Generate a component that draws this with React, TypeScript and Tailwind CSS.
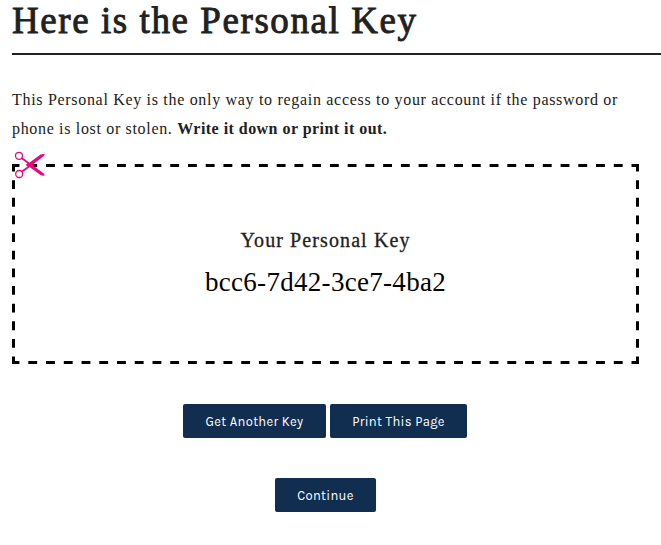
import type { ReactNode } from 'react';

function DashedFrame() {
  return (
    <svg className="absolute inset-0" width="627" height="200" viewBox="0 0 627 200" fill="none" aria-hidden="true">
      <g stroke="#000" strokeWidth="3">
        <g strokeDasharray="8.871 8.871" strokeDashoffset="4.436">
          <path d="M3 1.5H624" />
          <path d="M3 198.5H624" />
        </g>
        <g strokeDasharray="8.818 8.818" strokeDashoffset="4.409">
          <path d="M1.5 3V197" />
          <path d="M625.5 3V197" />
        </g>
      </g>
      <path d="M0 0h3v3h-3zM624 0h3v3h-3zM0 197h3v3h-3zM624 197h3v3h-3z" fill="#000" />
    </svg>
  );
}

function Scissors() {
  return (
    <svg className="absolute left-[2px] -top-[13px]" width="32" height="28" viewBox="0 0 32 28" fill="none" aria-hidden="true">
      <g stroke="#e5097f">
        <circle cx="5" cy="4.8" r="3.5" strokeWidth="1.3" />
        <circle cx="5.2" cy="23" r="3.5" strokeWidth="1.3" />
        <path d="M7.5 7L15 12.5M7.8 20.7L15 15.5" strokeWidth="1.8" />
      </g>
      <g fill="#e5097f">
        <path d="M12 14.2L26.5 3.6Q28.4 2.8 30.7 3L30 4.7L16 15.8L13.8 15.6Z" />
        <path d="M12 13.5L26.5 24.1Q28.4 24.9 30.7 24.6L30 22.8L16 12L13.8 12.2Z" />
      </g>
    </svg>
  );
}

function Button({ className, children }: { className: string; children: ReactNode }) {
  return (
    <button className={`h-[34px] rounded-[2px] bg-[#112e51] pt-[2px] font-[Karla,Inter,sans-serif] text-[13px] text-white whitespace-nowrap ${className}`}>
      {children}
    </button>
  );
}

export default function App() {
  return (
    <main className="h-[545px] overflow-hidden bg-white pl-3 font-['Liberation_Serif',serif] text-[#212121]">
      <h1 className="h-[55px] border-b-2 border-[#212121] pt-px text-[37px] leading-[40px] tracking-[1.57px] whitespace-nowrap [-webkit-text-stroke:0.9px_#212121]">
        Here is the Personal Key
      </h1>
      <p className="mt-[30px] text-[16px] leading-[29px] whitespace-nowrap">
        <span className="tracking-[0.69px]">This Personal Key is the only way to regain access to your account if the password or</span>
        <br />
        <span className="tracking-[0.67px]">phone is lost or stolen. </span>
        <strong className="tracking-[0.46px]">Write it down or print it out.</strong>
      </p>
      <section className="relative mt-[21px] flex h-[200px] w-[627px] flex-col items-center pt-[62px]">
        <DashedFrame />
        <Scissors />
        <h2 className="text-[20px] leading-7 tracking-[1.1px] [-webkit-text-stroke:0.3px_#212121]">Your Personal Key</h2>
        <div className="mt-[10px] text-[27px] leading-9 tracking-[0.3px] text-black">bcc6-7d42-3ce7-4ba2</div>
      </section>
      <div className="mt-10 flex gap-1 pl-[171px]">
        <Button className="w-[143px] tracking-[0.3px]">Get Another Key</Button>
        <Button className="w-[137px] tracking-[0.3px]">Print This Page</Button>
      </div>
      <div className="mt-10 flex pl-[263px]">
        <Button className="w-[101px] tracking-[0.3px]">Continue</Button>
      </div>
    </main>
  );
}
